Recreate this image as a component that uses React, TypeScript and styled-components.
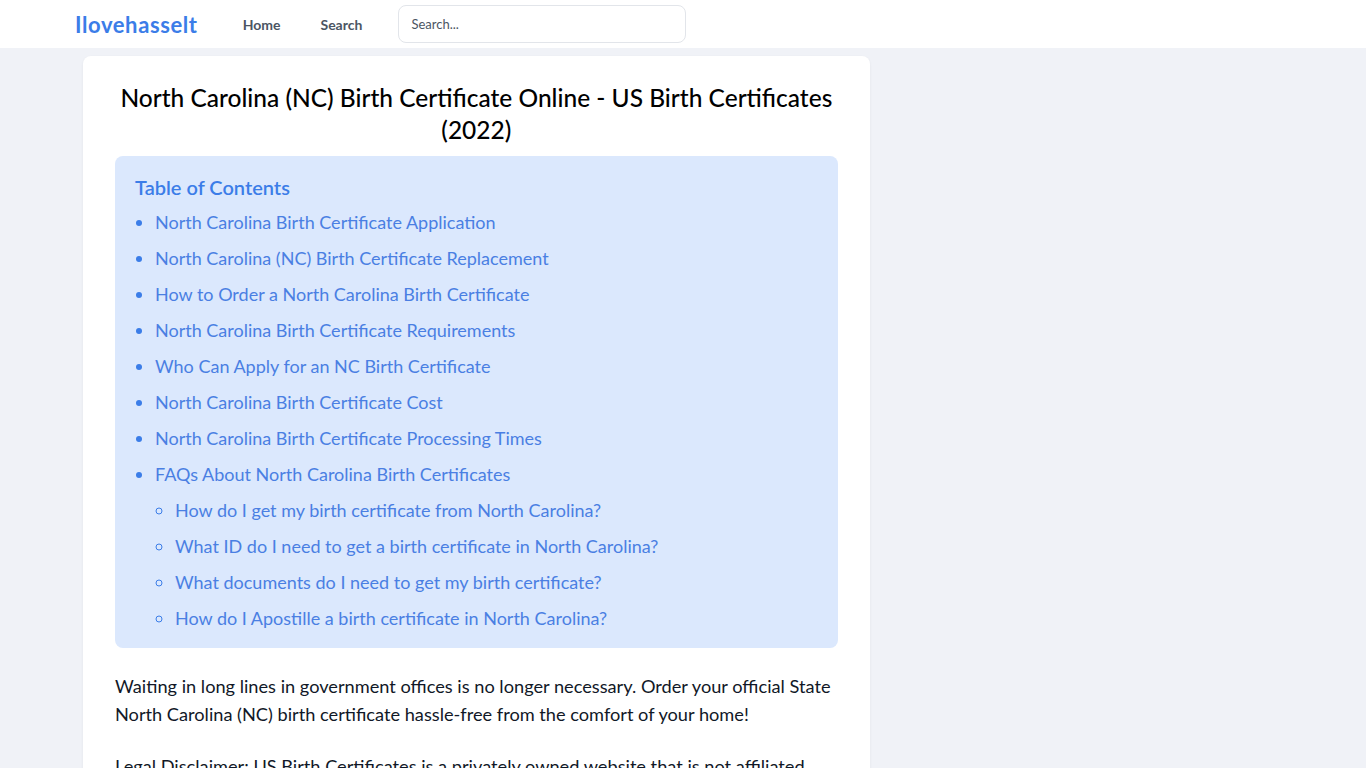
import styled, { createGlobalStyle } from "styled-components";

const GlobalStyle = createGlobalStyle`
  html, body {
    margin: 0;
    padding: 0;
    background: #f0f2f7;
    font-family: Lato, "Liberation Sans", sans-serif;
    color: #111827;
  }
  * {
    box-sizing: border-box;
  }
`;

type TocEntry = { title: string; children?: string[] };

const toc: TocEntry[] = [
  { title: "North Carolina Birth Certificate Application" },
  { title: "North Carolina (NC) Birth Certificate Replacement" },
  { title: "How to Order a North Carolina Birth Certificate" },
  { title: "North Carolina Birth Certificate Requirements" },
  { title: "Who Can Apply for an NC Birth Certificate" },
  { title: "North Carolina Birth Certificate Cost" },
  { title: "North Carolina Birth Certificate Processing Times" },
  {
    title: "FAQs About North Carolina Birth Certificates",
    children: [
      "How do I get my birth certificate from North Carolina?",
      "What ID do I need to get a birth certificate in North Carolina?",
      "What documents do I need to get my birth certificate?",
      "How do I Apostille a birth certificate in North Carolina?",
    ],
  },
];

export default function App(): JSX.Element {
  return (
    <>
      <GlobalStyle />
      <Header>
        <HeaderInner>
          <Logo href="#">Ilovehasselt</Logo>
          <Nav>
            <NavLink href="#">Home</NavLink>
            <NavLink href="#">Search</NavLink>
          </Nav>
          <SearchInput type="text" placeholder="Search..." />
        </HeaderInner>
      </Header>

      <Layout>
        <Main>
          <Card>
            <Title>
              North Carolina (NC) Birth Certificate Online - US Birth
              Certificates (2022)
            </Title>

            <TocBox>
              <TocHeading>Table of Contents</TocHeading>
              <TocList>
                {toc.map((entry, index) => (
                  <TocItem key={index}>
                    <TocLink href="#">{entry.title}</TocLink>
                    {entry.children && (
                      <TocSubList>
                        {entry.children.map((child, i) => (
                          <TocItem key={i}>
                            <TocLink href="#">{child}</TocLink>
                          </TocItem>
                        ))}
                      </TocSubList>
                    )}
                  </TocItem>
                ))}
              </TocList>
            </TocBox>

            <Paragraph>
              Waiting in long lines in government offices is no longer
              necessary. Order your official State North Carolina (NC) birth
              certificate hassle-free from the comfort of your home!
            </Paragraph>
            <Paragraph>
              Legal Disclaimer: US Birth Certificates is a privately owned
              website that is not affiliated with any government agency. We
              help you prepare and submit your application quickly and
              securely.
            </Paragraph>
          </Card>
        </Main>
        <Sidebar />
      </Layout>
    </>
  );
}

const Header = styled.header`
  background: #ffffff;
  height: 48px;
`;

const HeaderInner = styled.div`
  width: 1216px;
  margin: 0 auto;
  height: 100%;
  display: flex;
  align-items: center;
`;

const Logo = styled.a`
  font-size: 22px;
  font-weight: 700;
  color: #3b7de8;
  text-decoration: none;
  letter-spacing: 0.6px;
`;

const Nav = styled.nav`
  display: flex;
  gap: 40px;
  margin-left: 45px;
`;

const NavLink = styled.a`
  font-size: 14px;
  font-weight: 700;
  color: #4b5563;
  text-decoration: none;
`;

const SearchInput = styled.input`
  margin-left: 36px;
  width: 288px;
  height: 38px;
  border: 1px solid #e2e5ea;
  border-radius: 8px;
  padding: 0 12px;
  font-family: inherit;
  font-size: 13px;
  color: #374151;
  outline: none;
  &::placeholder {
    color: #4b5563;
  }
`;

const Layout = styled.div`
  width: 1216px;
  margin: 0 auto;
  display: grid;
  grid-template-columns: repeat(3, 1fr);
  gap: 24px;
`;

const Main = styled.main`
  grid-column: span 2;
  padding: 8px;
`;

const Sidebar = styled.aside``;

const Card = styled.article`
  background: #ffffff;
  border-radius: 8px;
  box-shadow: 0 1px 3px rgba(15, 23, 42, 0.06);
  padding: 26px 32px 32px;
`;

const Title = styled.h1`
  margin: 0 0 10px;
  font-size: 24.5px;
  line-height: 32px;
  font-weight: 500;
  text-align: center;
  color: #000000;
`;

const TocBox = styled.nav`
  background: #dbe8fd;
  border-radius: 8px;
  padding: 20px 20px 16px;
`;

const TocHeading = styled.div`
  font-size: 20px;
  line-height: 22px;
  font-weight: 600;
  color: #3b7de8;
  margin-bottom: 10px;
`;

const TocList = styled.ul`
  margin: 0;
  padding-left: 20px;
  list-style: disc;
  color: #3b7de8;
`;

const TocSubList = styled.ul`
  margin: 8px 0 0;
  padding-left: 20px;
  list-style: circle;
`;

const TocItem = styled.li`
  font-size: 18px;
  line-height: 28px;
  & + & {
    margin-top: 8px;
  }
`;

const TocLink = styled.a`
  color: #4a7fe3;
  text-decoration: none;
`;

const Paragraph = styled.p`
  margin: 24px 0 0;
  font-size: 18.2px;
  line-height: 28px;
  color: #111827;
`;
